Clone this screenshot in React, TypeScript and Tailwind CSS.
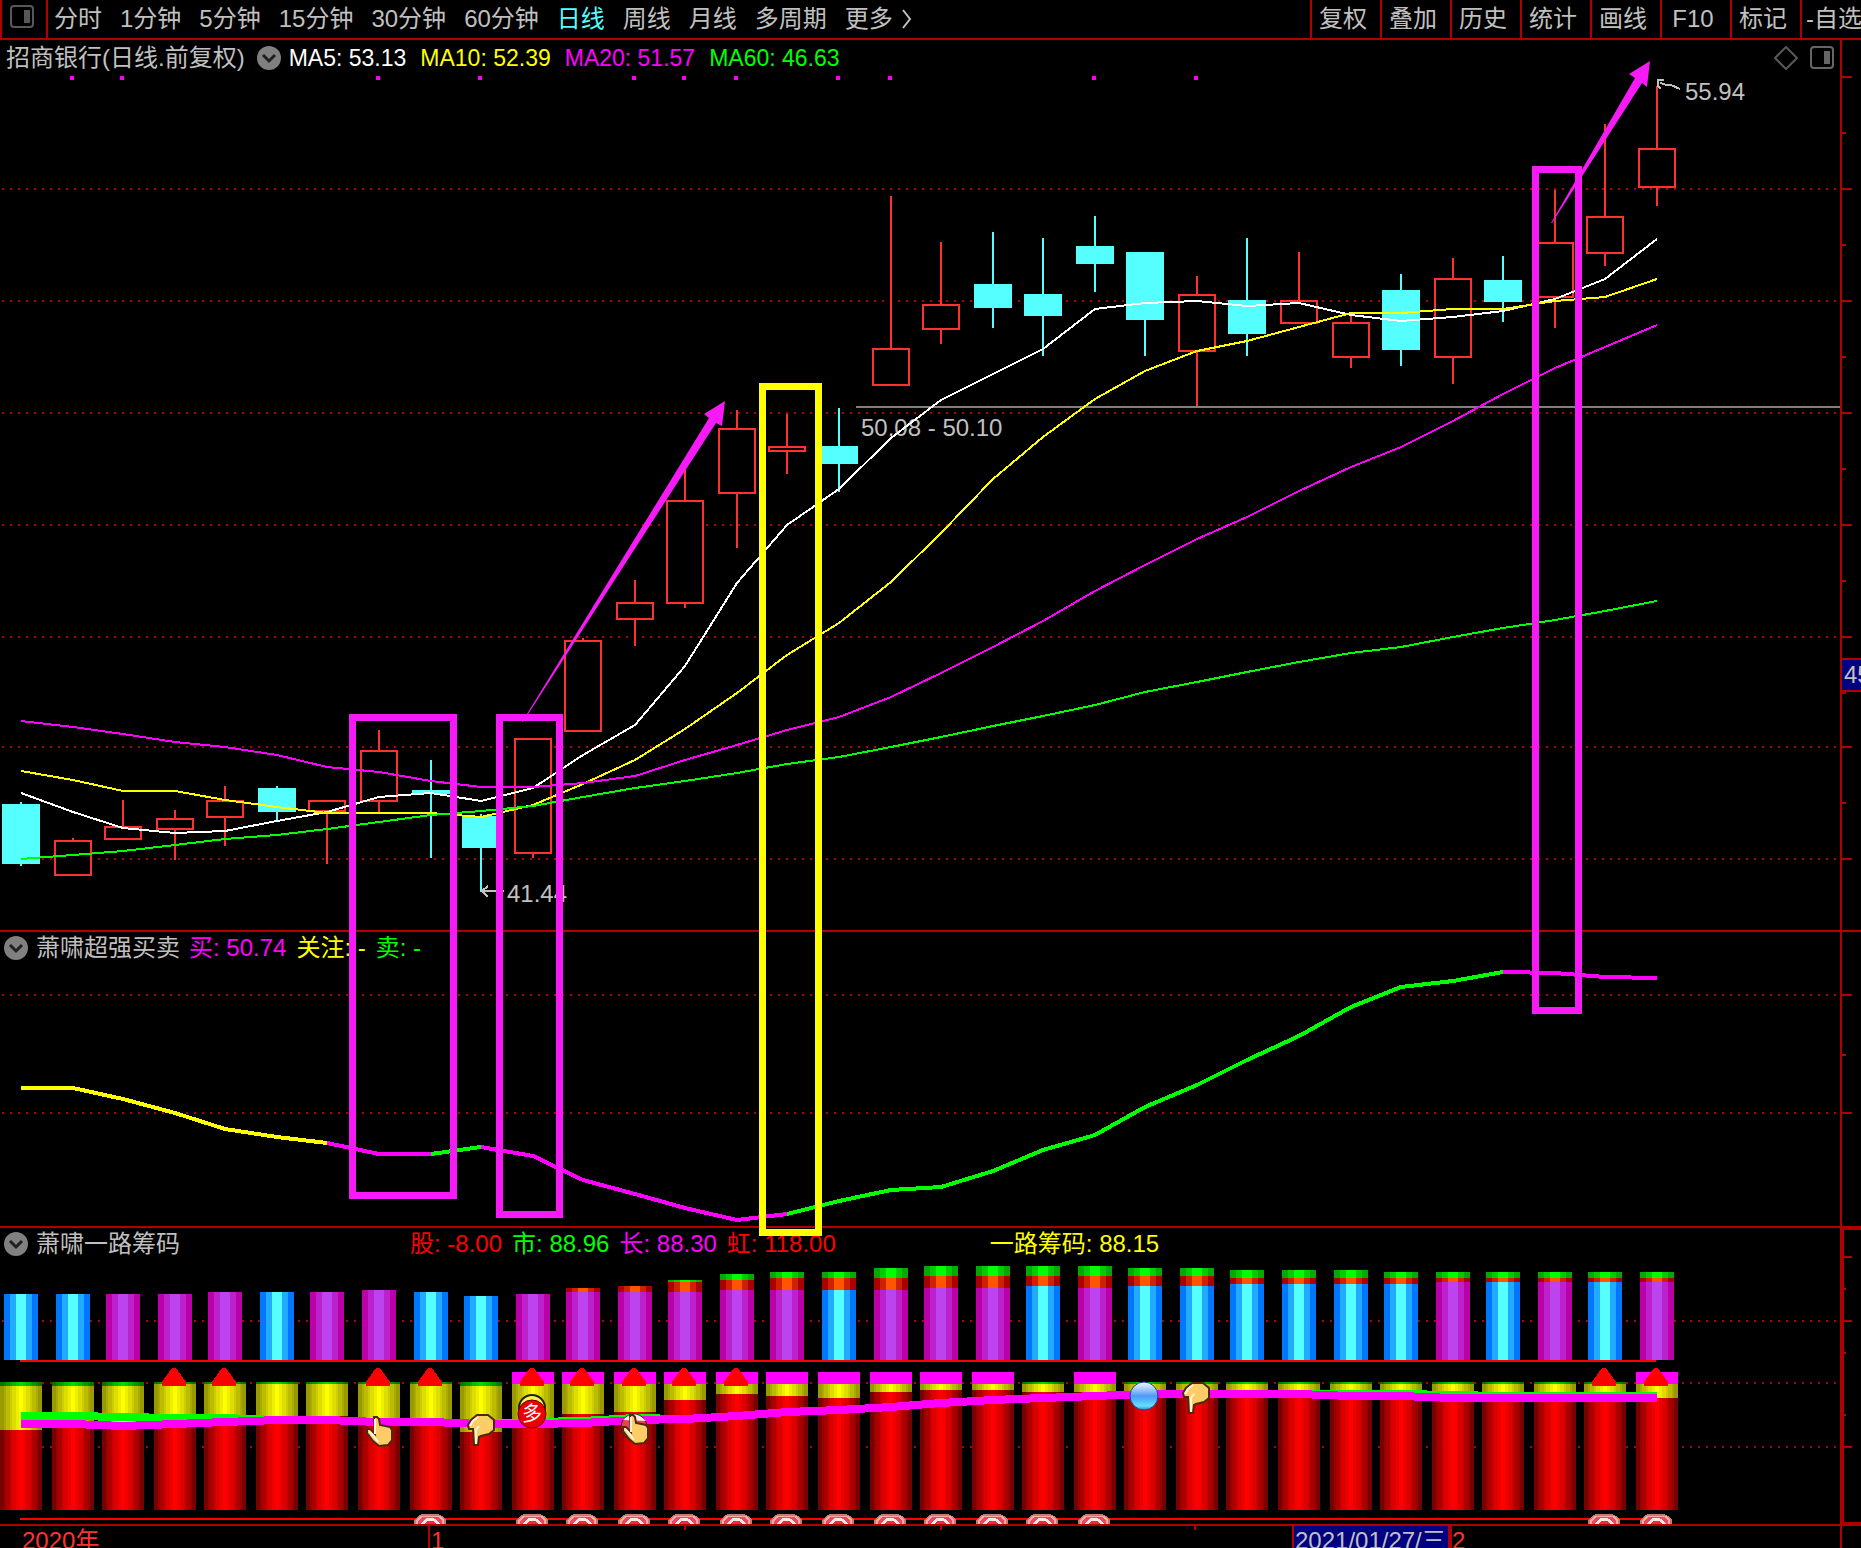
import React from "react";

const SANS = "font-['Liberation_Sans','Noto_Sans_CJK_SC',sans-serif]";

const X = [
  21, 73, 123, 175, 225, 277, 327, 379, 431, 481, 533, 583, 635, 685, 737, 787, 839, 891, 941, 993, 1043, 1095,
  1145, 1197, 1247, 1299, 1351, 1401, 1453, 1503, 1555, 1605, 1657,
];

type Candle = [up: boolean, top: number, bottom: number, high: number, low: number];

const CANDLES: Candle[] = [
  [false, 804, 864, 802, 866],
  [true, 840, 876, 838, 876],
  [true, 826, 840, 800, 840],
  [true, 818, 830, 810, 860],
  [true, 800, 818, 786, 846],
  [false, 788, 812, 786, 820],
  [true, 800, 812, 800, 864],
  [true, 750, 802, 730, 813],
  [false, 790, 794, 760, 858],
  [false, 816, 848, 814, 892],
  [true, 738, 854, 738, 858],
  [true, 640, 732, 638, 732],
  [true, 602, 620, 580, 646],
  [true, 500, 604, 466, 608],
  [true, 428, 494, 410, 548],
  [true, 446, 452, 414, 474],
  [false, 446, 464, 408, 492],
  [true, 348, 386, 196, 386],
  [true, 304, 330, 242, 344],
  [false, 284, 308, 232, 328],
  [false, 294, 316, 238, 356],
  [false, 246, 264, 216, 292],
  [false, 252, 320, 252, 356],
  [true, 294, 352, 276, 406],
  [false, 300, 334, 238, 356],
  [true, 300, 324, 252, 324],
  [true, 322, 358, 316, 368],
  [false, 290, 350, 274, 366],
  [true, 278, 358, 258, 384],
  [false, 280, 302, 256, 322],
  [true, 242, 298, 190, 328],
  [true, 216, 254, 124, 266],
  [true, 148, 188, 86, 206],
];

const MA5 = [793, 812, 828, 833, 831, 821, 812, 797, 793, 801, 788, 755, 725, 666, 583, 525, 489, 438, 400, 374, 349, 309, 303, 301, 306, 303, 315, 321, 317, 311, 299, 279, 239];
const MA10 = [771, 780, 791, 791, 800, 807, 813, 813, 813, 817, 805, 784, 760, 729, 693, 655, 623, 582, 533, 479, 437, 399, 371, 351, 341, 327, 313, 313, 309, 309, 301, 297, 279];
const MA20 = [721, 727, 734, 742, 747, 755, 767, 772, 781, 787, 787, 783, 776, 760, 745, 730, 717, 697, 673, 647, 621, 591, 565, 539, 517, 491, 467, 447, 421, 394, 368, 347, 325];
const MA60 = [859, 855, 851, 845, 839, 835, 829, 822, 815, 811, 806, 797, 788, 781, 773, 764, 757, 747, 737, 726, 716, 705, 692, 682, 672, 662, 653, 647, 637, 628, 620, 611, 601];

const TREND = [1088, 1088, 1099, 1113, 1129, 1137, 1143, 1154, 1154, 1147, 1156, 1180, 1194, 1208, 1220, 1214, 1201, 1190, 1187, 1171, 1150, 1135, 1107, 1085, 1060, 1036, 1007, 987, 981, 972, 973, 977, 978];
const TREND_PARTS: [number, number, string][] = [
  [0, 6, "#ffff00"],
  [6, 8, "#ff00ff"],
  [8, 9, "#00ff00"],
  [9, 15, "#ff00ff"],
  [15, 29, "#00ff00"],
  [29, 32, "#ff00ff"],
];

const MARKED = [1, 2, 7, 9, 12, 13, 14, 16, 17, 21, 23];

const CYAN_BARS = [0, 1, 5, 8, 9, 16, 20, 22, 23, 24, 25, 26, 27, 29, 31];
// Body top, orange cap top, green cap top of every upper column.
const UPPER: [number, number, number][] = [
  [1294, 1294, 1294], [1294, 1294, 1294], [1294, 1294, 1294], [1294, 1294, 1294],
  [1292, 1292, 1292], [1292, 1292, 1292], [1292, 1292, 1292], [1290, 1290, 1290],
  [1292, 1292, 1292], [1296, 1296, 1296], [1294, 1294, 1294], [1292, 1288, 1288],
  [1292, 1286, 1286], [1292, 1282, 1280], [1290, 1280, 1274], [1290, 1278, 1272],
  [1290, 1278, 1272], [1290, 1278, 1268], [1288, 1276, 1266], [1288, 1276, 1266],
  [1286, 1276, 1266], [1288, 1276, 1266], [1286, 1276, 1268], [1286, 1276, 1268],
  [1284, 1278, 1270], [1284, 1278, 1270], [1284, 1278, 1270], [1284, 1278, 1272],
  [1282, 1278, 1272], [1282, 1278, 1272], [1282, 1278, 1272], [1282, 1278, 1272],
  [1282, 1278, 1272],
];

const YELLOW_END = [1430, 1422, 1424, 1418, 1416, 1416, 1416, 1418, 1420, 1432, 1420, 1414, 1412, 1400, 1394, 1396, 1398, 1392, 1390, 1390, 1392, 1392, 1394, 1394, 1394, 1394, 1396, 1396, 1396, 1396, 1396, 1396, 1398];
const BLOCKS = [10, 11, 12, 13, 14, 15, 16, 17, 18, 19, 21, 32];
const THICK_CAPS = [0, 1, 2, 9];
const TRIANGLES = [3, 4, 7, 8, 10, 11, 12, 13, 14, 31, 32];
const COINS = [8, 10, 11, 12, 13, 14, 15, 16, 17, 18, 19, 20, 21, 31, 32];
const CHIP = [1424, 1424, 1426, 1424, 1422, 1420, 1420, 1422, 1422, 1424, 1424, 1423, 1420, 1419, 1416, 1412, 1410, 1407, 1403, 1400, 1398, 1396, 1394, 1394, 1394, 1394, 1396, 1396, 1398, 1398, 1398, 1398, 1398];
const CHIP_GREEN = [1416, 1416, 1417, 1418, 1418, 1420, 1420, 1422, 1422, 1424, 1422, 1421, 1418, 1419, 1416, 1412, 1410, 1407, 1403, 1400, 1398, 1396, 1394, 1394, 1394, 1394, 1394, 1394, 1395, 1396, 1396, 1396, 1396];

const line = (ys: number[], from = 0, to = ys.length - 1) =>
  ys.slice(from, to + 1).map((y, i) => `${X[from + i]},${y}`).join(" ");

function Grid({ ys }: { ys: number[] }) {
  return (
    <g stroke="#b00000" strokeWidth="2" strokeDasharray="2 6">
      {ys.map((y) => (
        <line key={y} x1="2" x2="1840" y1={y} y2={y} />
      ))}
    </g>
  );
}

function Ticks({ top, height, major, minor, left = 0 }: { top: number; height: number; major: number[]; minor: number[]; left?: number }) {
  return (
    <svg className="block h-full w-full" viewBox={`${left} ${top} ${19 - left} ${height}`} preserveAspectRatio="none" shapeRendering="crispEdges" aria-hidden="true">
      {major.map((y) => (
        <rect key={y} x="0" y={y - 1} width="10" height="2" fill="#b00000" />
      ))}
      {minor.map((y) => (
        <rect key={y} x="0" y={y - 1} width="4" height="2" fill="#b00000" />
      ))}
    </svg>
  );
}

function PanelIcon({ color }: { color: string }) {
  return (
    <svg width="24" height="24" viewBox="0 0 24 24" aria-hidden="true">
      <rect x="1" y="1" width="22" height="21" rx="3" fill="none" stroke={color} strokeWidth="2" />
      <rect x="14" y="5" width="6" height="13" fill={color} />
    </svg>
  );
}

function Chevron({ label }: { label: string }) {
  return (
    <button type="button" aria-label={label} className="shrink-0">
      <svg className="block" width="24" height="24" viewBox="0 0 24 24" aria-hidden="true">
        <circle cx="12" cy="12" r="12" fill="#808080" />
        <path d="M6 9 L12 15 L18 9" fill="none" stroke="#202020" strokeWidth="3" />
      </svg>
    </button>
  );
}

function HandUp({ x, y }: { x: number; y: number }) {
  return (
    <g transform={`translate(${x} ${y})`}>
      <path d="M8 1 L11 1 L13 3 L14 9 L24 11 L26 14 L26 24 L22 29 L13 30 L7 25 L1 17 L1 13 L4 13 L9 18 Z" fill="#ffcc66" stroke="#4a2a10" strokeWidth="2" />
      <path d="M9 3 V18 M3 15 L9 22 L12 26" fill="none" stroke="#fff4e0" strokeWidth="2" />
    </g>
  );
}

function HandDown({ x, y }: { x: number; y: number }) {
  return (
    <g transform={`translate(${x} ${y})`}>
      <path d="M10 1 L21 1 L27 6 L27 16 L22 20 L14 22 L12 23 L11 31 L7 31 L6 15 L2 15 L1 11 L4 6 Z" fill="#ffcc66" stroke="#4a2a10" strokeWidth="2" />
      <path d="M3 12 L6 7 L11 3 M9 30 V16 L12 12" fill="none" stroke="#fff4e0" strokeWidth="2" />
    </g>
  );
}

function Coin({ x }: { x: number }) {
  return (
    <g transform={`translate(${x} 1524)`}>
      <path d="M-16 0 V-4 L-12 -8 L-8 -10 H8 L12 -8 L16 -4 V0 Z" fill="#c08070" />
      <path d="M-14 0 V-4 L-10 -8 H10 L14 -4 V0 Z" fill="#ffaaa0" />
      <path d="M-12 0 V-3 L-8 -7 H8 L12 -3 V0 Z" fill="#f04468" />
      <path d="M-9 0 L-6 -4 L-3 -6 H3 L7 -4 L10 0 Z" fill="#ffe8e0" />
      <path d="M-6 0 L-3 -3 H3 L6 0 Z" fill="#f02848" />
    </g>
  );
}

function PriceChart() {
  return (
    <svg className="block h-auto w-full" viewBox="0 76 1840 854" shapeRendering="crispEdges" role="img" aria-label="日线 K线图">
      <Grid ys={[189, 301, 413, 525, 637, 747, 859]} />
      {MARKED.map((i) => (
        <rect key={i} x={X[i] - 3} y="76" width="4" height="4" fill="#ff00ff" />
      ))}
      <g fill="#c0c0c0" fontSize="24">
        <text x="861" y="436">50.08 - 50.10</text>
        <text x="1685" y="100">55.94</text>
        <text x="507" y="902">41.44</text>
      </g>
      <rect x="856" y="406" width="984" height="2" fill="#808080" />
      {CANDLES.map(([up, top, bottom, high, low], i) =>
        up ? (
          <g key={i} fill="#ff3232">
            <rect x={X[i] - 1} y={high} width="2" height={top - high} />
            <rect x={X[i] - 1} y={bottom} width="2" height={low - bottom} />
            <rect x={X[i] - 18} y={top + 1} width="36" height={bottom - top - 2} fill="#000000" stroke="#ff3232" strokeWidth="2" />
          </g>
        ) : (
          <g key={i} fill="#55ffff">
            <rect x={X[i] - 1} y={high} width="2" height={low - high} />
            <rect x={X[i] - 19} y={top} width="38" height={bottom - top} />
          </g>
        ),
      )}
      <g fill="none" strokeWidth="2">
        <polyline points={line(MA5)} stroke="#ffffff" />
        <polyline points={line(MA10)} stroke="#ffff00" />
        <polyline points={line(MA20)} stroke="#ff00ff" />
        <polyline points={line(MA60)} stroke="#00ff00" />
      </g>
      <g fill="none" stroke="#c0c0c0" strokeWidth="2">
        <path d="M1664 80 H1658 V86 L1661 89 M1660 83 L1667 85 H1671 L1680 89" />
        <path d="M504 891 H483 M488 886 L482 891 L488 897" />
      </g>
    </svg>
  );
}

function TrendChart() {
  return (
    <svg className="block h-auto w-full" viewBox="0 964 1840 262" shapeRendering="crispEdges" role="img" aria-label="萧啸超强买卖">
      <Grid ys={[995, 1113]} />
      {TREND_PARTS.map(([from, to, color]) => (
        <polyline key={from} points={line(TREND, from, to)} fill="none" stroke={color} strokeWidth="4" />
      ))}
    </svg>
  );
}

function Banded({ x, top, bottom, colors }: { x: number; top: number; bottom: number; colors: [string, string, string] }) {
  if (bottom <= top) return null;
  const h = bottom - top;
  return (
    <g>
      <rect x={x - 17} y={top} width="34" height={h} fill={colors[0]} />
      <rect x={x - 11} y={top} width="22" height={h} fill={colors[1]} />
      <rect x={x - 5} y={top} width="10" height={h} fill={colors[2]} />
    </g>
  );
}

const SHADES: Record<string, string[]> = {
  red: ["#770000", "#990000", "#aa0000", "#cc0000", "#dd0000", "#ee0000", "#ff0000"],
  yellow: ["#999900", "#aaaa00", "#bbbb00", "#cccc00", "#dddd00", "#eeee00", "#ffff00"],
  green: ["#007700", "#008800", "#009900", "#00aa00", "#00bb00", "#00cc00", "#00dd00"],
};
const INSETS = [0, 4, 6, 10, 12, 16, 19];

function Rounded({ x, top, bottom, tone }: { x: number; top: number; bottom: number; tone: string }) {
  return (
    <g>
      {SHADES[tone].map((fill, i) => (
        <rect key={fill} x={x - 21 + INSETS[i]} y={top} width={42 - 2 * INSETS[i]} height={bottom - top} fill={fill} />
      ))}
    </g>
  );
}

function ChipChart() {
  return (
    <svg className="block h-auto w-full" viewBox="0 1260 1840 264" shapeRendering="crispEdges" role="img" aria-label="萧啸一路筹码">
      <defs>
        <linearGradient id="ball" x1="0" y1="0" x2="0" y2="1">
          <stop offset="0" stopColor="#f4f8ff" />
          <stop offset="0.35" stopColor="#88b8f8" />
          <stop offset="0.5" stopColor="#4c98f8" />
          <stop offset="0.85" stopColor="#60e0ff" />
          <stop offset="1" stopColor="#3090d0" />
        </linearGradient>
      </defs>
      <Grid ys={[1321, 1383, 1447]} />
      {UPPER.map(([body, orange, green], i) => (
        <g key={i}>
          <Banded x={X[i]} top={body} bottom={1360} colors={CYAN_BARS.includes(i) ? ["#0077ff", "#22aaff", "#55ffff"] : ["#bb00aa", "#bb22cc", "#bb44ee"]} />
          <Banded x={X[i]} top={orange} bottom={body} colors={["#aa0000", "#cc2200", "#ff5500"]} />
          <Banded x={X[i]} top={green} bottom={orange} colors={["#00aa00", "#00cc00", "#00ff00"]} />
        </g>
      ))}
      <rect x="20" y="1360" width="1636" height="2" fill="#ff0000" />
      {X.map((x, i) => (
        <g key={x}>
          <Rounded x={x} top={YELLOW_END[i]} bottom={1510} tone="red" />
          <Rounded x={x} top={1384} bottom={YELLOW_END[i]} tone="yellow" />
          {BLOCKS.includes(i) ? (
            <rect x={x - 21} y="1372" width="42" height="12" fill="#ff00ff" />
          ) : (
            <Rounded x={x} top={1382} bottom={THICK_CAPS.includes(i) ? 1386 : 1384} tone="green" />
          )}
        </g>
      ))}
      <polyline points={line(CHIP_GREEN)} fill="none" stroke="#00ff00" strokeWidth="8" />
      <polyline points={line(CHIP)} fill="none" stroke="#ff00ff" strokeWidth="8" />
      {TRIANGLES.map((i) => (
        <path key={i} d={`M${X[i] - 3} 1368 h4 l10 14 v4 h-24 v-4 Z`} fill="#ff0000" />
      ))}
      <rect x="20" y="1518" width="1636" height="2" fill="#ff0000" />
      {COINS.map((i) => (
        <Coin key={i} x={X[i] - 1} />
      ))}
      <g shapeRendering="auto">
        <HandUp x={366} y={1416} />
        <HandDown x={467} y={1414} />
        <circle cx="532" cy="1408" r="13" fill="#f8f060" stroke="#202000" strokeWidth="2" />
        <circle cx="532" cy="1414" r="14" fill="#ee0000" stroke="#600000" strokeWidth="1" />
        <text x="532" y="1421" textAnchor="middle" fontSize="20" fill="#ffffff">多</text>
        <circle cx="634" cy="1427" r="13" fill="#e04848" stroke="#401010" strokeWidth="1" />
        <path d="M623 1420 Q634 1408 646 1421 Z" fill="#ffe8e8" />
        <HandUp x={622} y={1414} />
        <circle cx="1144" cy="1396" r="14" fill="url(#ball)" stroke="#204080" strokeWidth="1" />
        <HandDown x={1182} y={1382} />
      </g>
    </svg>
  );
}

function Annotations() {
  return (
    <svg className="pointer-events-none absolute inset-0 h-full w-full" viewBox="0 40 1861 1508" preserveAspectRatio="none" aria-hidden="true">
      <g fill="none" strokeWidth="7" shapeRendering="crispEdges">
        <rect x="352.5" y="717.5" width="101" height="478" stroke="#f61af6" />
        <rect x="499.5" y="717.5" width="60" height="497" stroke="#f61af6" />
        <rect x="1535.5" y="169.5" width="43" height="841" stroke="#f61af6" />
        <rect x="762.5" y="386.5" width="56" height="846" stroke="#ffff00" />
      </g>
      <g fill="#f61af6">
        <path d="M522 722 L709 418 L704 414 L725 401 L722 426 L716 423 L523 722 Z" />
        <path d="M1551 223 L1635 78 L1629 74 L1650 61 L1647 87 L1642 83 L1552 223 Z" />
      </g>
    </svg>
  );
}

const PERIODS = ["分时", "1分钟", "5分钟", "15分钟", "30分钟", "60分钟", "日线", "周线", "月线", "多周期", "更多"];
const TOOLS = ["复权", "叠加", "历史", "统计", "画线", "F10", "标记"];

export default function App() {
  return (
    <div className={`min-h-screen w-full overflow-hidden bg-black text-2xl leading-8 whitespace-nowrap text-[#c0c0c0] ${SANS}`}>
      <header className="flex h-10 items-stretch border-b-2 border-l-2 border-[#b00000]">
        <button type="button" aria-label="侧栏" className="flex w-[46px] shrink-0 items-center border-r-2 border-[#b00000] pb-1 pl-2">
          <PanelIcon color="#585858" />
        </button>
        <nav className="flex flex-1 items-center gap-[18px] pl-1.5">
          {PERIODS.map((p) => (
            <button key={p} type="button" className={p === "日线" ? "text-[#55ffff]" : "flex items-center"}>
              {p}
              {p === "更多" && (
                <svg className="ml-2" width="12" height="24" viewBox="0 0 12 24" aria-hidden="true">
                  <path d="M2 3 L9 12 L2 21" fill="none" stroke="#c0c0c0" strokeWidth="2" />
                </svg>
              )}
            </button>
          ))}
        </nav>
        <div className="flex shrink-0">
          {TOOLS.map((t) => (
            <button key={t} type="button" className="w-[70px] border-l-2 border-[#b00000] pr-1.5">
              {t}
            </button>
          ))}
          <button type="button" className="w-[61px] overflow-hidden border-l-2 border-[#b00000] pl-1 text-left">
            -自选
          </button>
        </div>
      </header>

      <main className="relative">
        <section className="flex border-b-2 border-[#b00000]">
          <div className="min-w-0 flex-1">
            <div className="flex h-9 items-center pl-1.5">
              <h1>招商银行(日线.前复权)</h1>
              <span className="ml-3 flex">
                <Chevron label="均线设置" />
              </span>
              <div className="ml-2 flex gap-3.5 text-[23px]">
                <span className="text-white">MA5: 53.13</span>
                <span className="text-[#ffff00]">MA10: 52.39</span>
                <span className="text-[#ff00ff]">MA20: 51.57</span>
                <span className="text-[#00ff00]">MA60: 46.63</span>
              </div>
              <div className="mr-1.5 ml-auto flex items-center gap-3">
                <button type="button" aria-label="标记">
                  <svg className="block" width="24" height="24" viewBox="0 0 24 24" aria-hidden="true">
                    <path d="M12 1 L23 12 L12 23 L1 12 Z" fill="none" stroke="#585858" strokeWidth="2" />
                  </svg>
                </button>
                <button type="button" aria-label="分栏">
                  <PanelIcon color="#666666" />
                </button>
              </div>
            </div>
            <PriceChart />
          </div>
          <aside className="relative w-[21px] shrink-0 overflow-hidden border-l-2 border-[#b00000]">
            <div className="absolute inset-0">
              <Ticks top={40} height={890} major={[77, 189, 301, 413, 525, 637, 747, 859]} minor={[133, 245, 357, 469, 581, 693, 803]} />
            </div>
            <span className="absolute top-[618px] left-0 flex h-[34px] items-center border-y-2 border-[#b00000] bg-[#000080] pl-0.5">45.34</span>
          </aside>
        </section>

        <section className="flex border-b-2 border-[#b00000]">
          <div className="min-w-0 flex-1">
            <div className="flex h-8 items-center gap-2 pl-1">
              <Chevron label="指标设置" />
              <h2>萧啸超强买卖</h2>
              <div className="ml-px flex gap-2.5">
                <span className="text-[#ff00ff]">买: 50.74</span>
                <span className="text-[#ffff00]">关注: -</span>
                <span className="text-[#00ff00]">卖: -</span>
              </div>
            </div>
            <TrendChart />
          </div>
          <aside className="relative w-[21px] shrink-0 border-l-2 border-[#b00000]">
            <div className="absolute inset-0">
              <Ticks top={932} height={294} major={[995, 1113]} minor={[1055]} />
            </div>
          </aside>
        </section>

        <section className="flex border-b-2 border-[#b00000]">
          <div className="min-w-0 flex-1">
            <div className="flex h-8 items-center gap-2 pl-1">
              <Chevron label="指标设置" />
              <h2>萧啸一路筹码</h2>
              <div className="ml-[222px] flex gap-2.5">
                <span className="text-[#ff0000]">股: -8.00</span>
                <span className="text-[#00ff00]">市: 88.96</span>
                <span className="text-[#ff00ff]">长: 88.30</span>
                <span className="text-[#ff0000]">虹: 118.00</span>
              </div>
              <span className="ml-[146px] text-[#ffff00]">一路筹码: 88.15</span>
            </div>
            <ChipChart />
          </div>
          <aside className="relative w-[21px] shrink-0 border-y-2 border-l-4 border-[#b00000]">
            <div className="absolute inset-0">
              <Ticks top={1230} height={292} left={2} major={[1257, 1321, 1447]} minor={[1289, 1353, 1415]} />
            </div>
          </aside>
        </section>

        <footer className="flex h-[22px] items-start overflow-hidden leading-[30px] text-[#ff3232]">
          <div className="w-[428px] pl-[22px]">2020年</div>
          <div className="w-[864px] border-l-2 border-[#b00000]">
            <div className="flex">
              <span className="w-[254px] pl-px">1</span>
              <span className="h-1 w-[256px] border-l-2 border-[#b00000]" />
              <span className="h-1 w-[254px] border-l-2 border-[#b00000]" />
              <span className="h-1 border-l-2 border-[#b00000]" />
            </div>
          </div>
          <div className="w-[160px] border-r-4 border-l-2 border-[#b00000] bg-[#000080] pl-px text-[#c0c0c0]">2021/01/27/三</div>
          <div className="flex-1">2</div>
          <div className="h-full w-[21px] shrink-0 border-l-2 border-[#b00000]" />
        </footer>

        <Annotations />
      </main>
    </div>
  );
}
